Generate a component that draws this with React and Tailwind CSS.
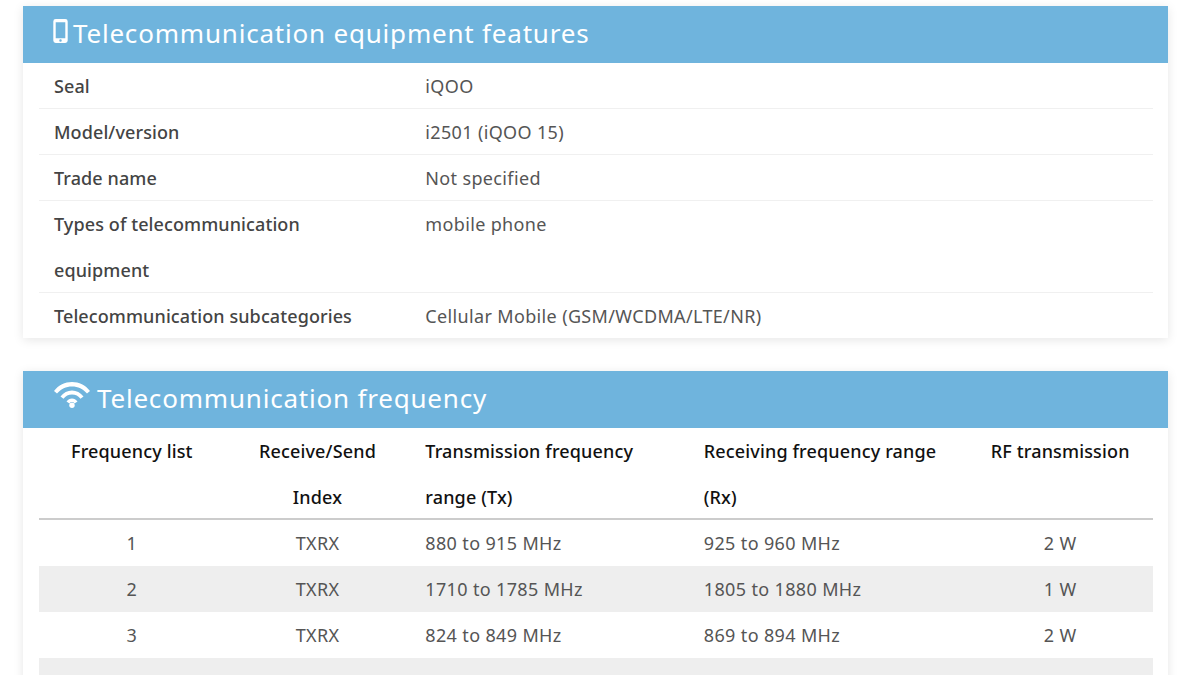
import React from 'react';

const features = [
  ['Seal', 'iQOO'],
  ['Model/version', 'i2501 (iQOO 15)'],
  ['Trade name', 'Not specified'],
  ['Types of telecommunication equipment', 'mobile phone'],
  ['Telecommunication subcategories', 'Cellular Mobile (GSM/WCDMA/LTE/NR)'],
];

const frequencies = [
  ['1', 'TXRX', '880 to 915 MHz', '925 to 960 MHz', '2 W'],
  ['2', 'TXRX', '1710 to 1785 MHz', '1805 to 1880 MHz', '1 W'],
  ['3', 'TXRX', '824 to 849 MHz', '869 to 894 MHz', '2 W'],
  ['', '', '', '', ''],
];

const PhoneIcon = () => (
  <svg width="15" height="24" viewBox="0 0 15 25" className="shrink-0 mb-[5px] mr-[5px]">
    <path fill="white" fillRule="evenodd" d="M2.5 0h10A2.500 2.500 0 0 1 15 2.500v20a2.500 2.500 0 0 1-2.500 2.500h-10A2.500 2.500 0 0 1 0 22.500v-20A2.500 2.500 0 0 1 2.500 0zM2.500 3.500V20h10V3.500zM7.500 21a1.300 1.300 0 1 0 0 2.600a1.300 1.300 0 0 0 0-2.600z" />
  </svg>
);

const WifiIcon = () => (
  <svg width="36" height="26" viewBox="0 0 36 26" className="shrink-0 mb-[7px] mr-[7px] ml-px">
    <path fill="white" d="M0 9C4.500 3 11 0 18 0s13.500 3 18 9l-3 2.500C29 7 24 4.500 18 4.500S7 7 3 11.500z" />
    <path fill="white" d="M6.500 14.500C9.500 10.500 13.500 8.500 18 8.500s8.500 2 11.500 6l-3 2.300C24.500 14 21.500 12.500 18 12.500s-6.500 1.500-8.500 4.300z" />
    <path fill="white" d="M12.500 19.500c1.500-2 3.300-3 5.500-3s4 1 5.500 3l-3 2c-.7-.9-1.500-1.400-2.500-1.400s-1.800.5-2.500 1.400z" />
    <circle cx="18" cy="23.300" r="2.700" fill="white" />
  </svg>
);

const Card = ({ icon, title, children }) => (
  <section className="bg-white shadow-[0_2px_10px_rgba(0,0,0,0.1)]">
    <h2 className="h-[57px] bg-[#6fb4dd] pl-[30px] pb-[2px] flex items-center text-white text-[26px] font-normal tracking-[0.8px]">
      {icon}
      <span>{title}</span>
    </h2>
    <div className="pl-4 pr-[15px]">{children}</div>
  </section>
);

export default function App() {
  return (
    <div className="h-[675px] overflow-hidden bg-white pt-[6px] pl-[23px] pr-[32px] flex flex-col gap-[33px] font-['Noto_Sans',sans-serif] text-[18px] tracking-[0.35px] text-[#555]">
      <Card icon={<PhoneIcon />} title="Telecommunication equipment features">
        {features.map(([label, value], i) => (
          <div key={label} className={`grid grid-cols-[1fr_2fr] leading-[46px] ${i < features.length - 1 ? 'shadow-[inset_0_-1px_0_#f0f0f0]' : '-mb-px'}`}>
            <div className="px-[15px] font-medium tracking-[0.1px] text-[#444]">{label}</div>
            <div className="px-[15px]">{value}</div>
          </div>
        ))}
      </Card>
      <Card icon={<WifiIcon />} title="Telecommunication frequency">
        <div className="grid grid-cols-[2fr_2fr_3fr_3fr_2fr] shadow-[inset_0_-2px_0_#ccc] font-medium tracking-[0.15px] text-[#111] leading-[46px]">
          <div className="px-[15px] text-center">Frequency list</div>
          <div className="px-[15px] text-center">Receive/Send Index</div>
          <div className="px-[15px]">Transmission frequency range (Tx)</div>
          <div className="px-[15px]">Receiving frequency range (Rx)</div>
          <div className="px-[15px] text-center">RF transmission</div>
        </div>
        {frequencies.map((row, i) => (
          <div key={i} className={`grid grid-cols-[2fr_2fr_3fr_3fr_2fr] h-[46px] leading-[46px] ${i % 2 === 1 ? 'bg-[#eeeeee]' : ''}`}>
            <div className="px-[15px] text-center">{row[0]}</div>
            <div className="px-[15px] text-center">{row[1]}</div>
            <div className="px-[15px]">{row[2]}</div>
            <div className="px-[15px]">{row[3]}</div>
            <div className="px-[15px] text-center">{row[4]}</div>
          </div>
        ))}
      </Card>
    </div>
  );
}
